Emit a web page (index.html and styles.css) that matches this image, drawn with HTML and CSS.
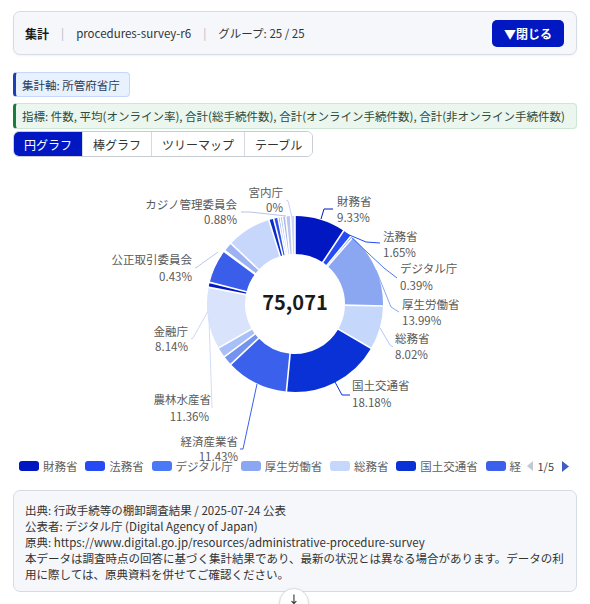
FILE: index.html
```html
<!DOCTYPE html>
<html lang="ja">
<head>
<meta charset="utf-8">
<title>集計 - procedures-survey-r6</title>
<link rel="stylesheet" href="styles.css">
</head>
<body>
<div class="page">
  <header class="summary">
    <div class="summary-info">
      <strong class="summary-title">集計</strong>
      <span class="sep">|</span>
      <span>procedures-survey-r6</span>
      <span class="sep">|</span>
      <span>グループ: 25 / 25</span>
    </div>
    <button class="btn-close" type="button">▼閉じる</button>
  </header>

  <div class="chip chip-axis">集計軸: 所管府省庁</div>
  <div class="chip chip-metric">指標: 件数, 平均(オンライン率), 合計(総手続件数), 合計(オンライン手続件数), 合計(非オンライン手続件数)</div>

  <div class="tabs">
    <div class="tab active">円グラフ</div>
    <div class="tab">棒グラフ</div>
    <div class="tab">ツリーマップ</div>
    <div class="tab">テーブル</div>
  </div>

  <svg class="pie-chart" viewBox="13 157 564 301" width="564" height="301">
    <g class="slices" fill="none" stroke-width="38">
      <circle cx="295" cy="304" r="69" stroke="#0017C1" stroke-dasharray="40.449 500" transform="rotate(-90 295 304)"/>
      <circle cx="295" cy="304" r="69" stroke="#264AF4" stroke-dasharray="7.153 500" transform="rotate(-56.412 295 304)"/>
      <circle cx="295" cy="304" r="69" stroke="#4979F5" stroke-dasharray="1.691 500" transform="rotate(-50.472 295 304)"/>
      <circle cx="295" cy="304" r="69" stroke="#8CA7F1" stroke-dasharray="60.652 500" transform="rotate(-49.068 295 304)"/>
      <circle cx="295" cy="304" r="69" stroke="#C5D7FB" stroke-dasharray="34.770 500" transform="rotate(1.296 295 304)"/>
      <circle cx="295" cy="304" r="69" stroke="#0A31D6" stroke-dasharray="78.818 500" transform="rotate(30.168 295 304)"/>
      <circle cx="295" cy="304" r="69" stroke="#3A60EC" stroke-dasharray="49.554 500" transform="rotate(95.616 295 304)"/>
      <circle cx="295" cy="304" r="69" stroke="#7393F0" stroke-dasharray="7.804 500" transform="rotate(136.764 295 304)"/>
      <circle cx="295" cy="304" r="69" stroke="#A9BFF7" stroke-dasharray="8.237 500" transform="rotate(143.244 295 304)"/>
      <circle cx="295" cy="304" r="69" stroke="#D9E4FC" stroke-dasharray="49.250 500" transform="rotate(150.084 295 304)"/>
      <circle cx="295" cy="304" r="69" stroke="#0017C1" stroke-dasharray="3.902 500" transform="rotate(190.98 295 304)"/>
      <circle cx="295" cy="304" r="69" stroke="#3A5DEA" stroke-dasharray="26.879 500" transform="rotate(194.22 295 304)"/>
      <circle cx="295" cy="304" r="69" stroke="#4979F5" stroke-dasharray="0.867 500" transform="rotate(216.54 295 304)"/>
      <circle cx="295" cy="304" r="69" stroke="#9CB2F3" stroke-dasharray="7.370 500" transform="rotate(217.26 295 304)"/>
      <circle cx="295" cy="304" r="69" stroke="#C7D7FB" stroke-dasharray="35.290 500" transform="rotate(223.38 295 304)"/>
      <circle cx="295" cy="304" r="69" stroke="#0A2BC7" stroke-dasharray="3.902 500" transform="rotate(252.684 295 304)"/>
      <circle cx="295" cy="304" r="69" stroke="#2A4EE6" stroke-dasharray="3.468 500" transform="rotate(255.924 295 304)"/>
      <circle cx="295" cy="304" r="69" stroke="#7096F8" stroke-dasharray="1.734 500" transform="rotate(258.804 295 304)"/>
      <circle cx="295" cy="304" r="69" stroke="#9DB2EE" stroke-dasharray="1.864 500" transform="rotate(260.244 295 304)"/>
      <circle cx="295" cy="304" r="69" stroke="#A9B8EA" stroke-dasharray="2.601 500" transform="rotate(261.792 295 304)"/>
      <circle cx="295" cy="304" r="69" stroke="#BAC6F2" stroke-dasharray="3.815 500" transform="rotate(263.952 295 304)"/>
      <circle cx="295" cy="304" r="69" stroke="#C9D5F9" stroke-dasharray="3.468 500" transform="rotate(267.12 295 304)"/>
    </g>
    <g class="gaps" stroke="#fff" stroke-width="1.6">
      <line x1="295" y1="214" x2="295" y2="256" transform="rotate(0 295 304)"/>
      <line x1="295" y1="214" x2="295" y2="256" transform="rotate(33.588 295 304)"/>
      <line x1="295" y1="214" x2="295" y2="256" transform="rotate(39.528 295 304)"/>
      <line x1="295" y1="214" x2="295" y2="256" transform="rotate(40.932 295 304)"/>
      <line x1="295" y1="214" x2="295" y2="256" transform="rotate(91.296 295 304)"/>
      <line x1="295" y1="214" x2="295" y2="256" transform="rotate(120.168 295 304)"/>
      <line x1="295" y1="214" x2="295" y2="256" transform="rotate(185.616 295 304)"/>
      <line x1="295" y1="214" x2="295" y2="256" transform="rotate(226.764 295 304)"/>
      <line x1="295" y1="214" x2="295" y2="256" transform="rotate(233.244 295 304)"/>
      <line x1="295" y1="214" x2="295" y2="256" transform="rotate(240.084 295 304)"/>
      <line x1="295" y1="214" x2="295" y2="256" transform="rotate(280.98 295 304)"/>
      <line x1="295" y1="214" x2="295" y2="256" transform="rotate(284.22 295 304)"/>
      <line x1="295" y1="214" x2="295" y2="256" transform="rotate(306.54 295 304)"/>
      <line x1="295" y1="214" x2="295" y2="256" transform="rotate(307.26 295 304)"/>
      <line x1="295" y1="214" x2="295" y2="256" transform="rotate(313.38 295 304)"/>
      <line x1="295" y1="214" x2="295" y2="256" transform="rotate(342.684 295 304)"/>
      <line x1="295" y1="214" x2="295" y2="256" transform="rotate(345.924 295 304)"/>
      <line x1="295" y1="214" x2="295" y2="256" transform="rotate(348.804 295 304)"/>
      <line x1="295" y1="214" x2="295" y2="256" transform="rotate(350.244 295 304)"/>
      <line x1="295" y1="214" x2="295" y2="256" transform="rotate(351.792 295 304)"/>
      <line x1="295" y1="214" x2="295" y2="256" transform="rotate(353.952 295 304)"/>
      <line x1="295" y1="214" x2="295" y2="256" transform="rotate(357.12 295 304)"/>
    </g>

    <g class="leaders" fill="none" stroke-width="1">
      <path d="M321 219 L324 209 L333 209" stroke="#0017C1"/>
      <path d="M347 234 L366 242 L380 243" stroke="#264AF4"/>
      <path d="M352 238 L384 268 L397 278" stroke="#4979F5"/>
      <path d="M376 270 L391 307 L399 312" stroke="#8CA7F1"/>
      <path d="M380 328 L390 345 L393 347" stroke="#B5C8F8"/>
      <path d="M335 382 L342 395 L350 395" stroke="#0A31D6"/>
      <path d="M257 384 L243 449 L240 449" stroke="#3A60EC"/>
      <path d="M209 318 L212 408" stroke="#D3DDF5"/>
      <path d="M208 311 L193 338 L191 339" stroke="#CFD9F2"/>
      <path d="M218 252 L197 267 L195 268" stroke="#B9C7EE"/>
      <path d="M286 216 L250 212 L241 212" stroke="#B7C3E8"/>
      <path d="M292 217 L288 201 L286 200" stroke="#C9D3F2"/>
    </g>

    <text class="total" x="295" y="310" text-anchor="middle">75,071</text>

    <g class="labels">
      <text x="337" y="206">財務省</text>
      <text x="337" y="222">9.33%</text>
      <text x="383" y="241">法務省</text>
      <text x="383" y="257">1.65%</text>
      <text x="400" y="273">デジタル庁</text>
      <text x="400" y="290">0.39%</text>
      <text x="402" y="309">厚生労働省</text>
      <text x="402" y="325">13.99%</text>
      <text x="395" y="343">総務省</text>
      <text x="395" y="359">8.02%</text>
      <text x="352" y="390">国土交通省</text>
      <text x="352" y="407">18.18%</text>
      <g text-anchor="end">
        <text x="238" y="446">経済産業省</text>
        <text x="238" y="461">11.43%</text>
        <text x="211" y="404">農林水産省</text>
        <text x="209" y="421">11.36%</text>
        <text x="188" y="336">金融庁</text>
        <text x="188" y="351">8.14%</text>
        <text x="192" y="264">公正取引委員会</text>
        <text x="192" y="281">0.43%</text>
        <text x="237" y="209">カジノ管理委員会</text>
        <text x="237" y="224">0.88%</text>
        <text x="283" y="197">宮内庁</text>
        <text x="283" y="212">0%</text>
      </g>
    </g>
  </svg>

  <div class="legend">
    <div class="legend-items">
      <div class="legend-item"><span class="swatch sw-1"></span>財務省</div>
      <div class="legend-item"><span class="swatch sw-2"></span>法務省</div>
      <div class="legend-item"><span class="swatch sw-3"></span>デジタル庁</div>
      <div class="legend-item"><span class="swatch sw-4"></span>厚生労働省</div>
      <div class="legend-item"><span class="swatch sw-5"></span>総務省</div>
      <div class="legend-item"><span class="swatch sw-6"></span>国土交通省</div>
      <div class="legend-item"><span class="swatch sw-7"></span>経済産業省</div>
    </div>
    <div class="pager">
      <svg class="pager-icon prev" width="6" height="10" viewBox="0 0 6 10"><path d="M6 0 L0 5 L6 10 Z"/></svg>
      <span class="pager-num">1/5</span>
      <svg class="pager-icon next" width="7" height="11" viewBox="0 0 7 11"><path d="M0 0 L7 5.5 L0 11 Z"/></svg>
    </div>
  </div>

  <div class="source">
    <p>出典: 行政手続等の棚卸調査結果 / 2025-07-24 公表</p>
    <p>公表者: デジタル庁 (Digital Agency of Japan)</p>
    <p>原典: https://www.digital.go.jp/resources/administrative-procedure-survey</p>
    <p>本データは調査時点の回答に基づく集計結果であり、最新の状況とは異なる場合があります。データの利用に際しては、原典資料を併せてご確認ください。</p>
  </div>
</div>
<button class="scroll-down" type="button" aria-label="下へ">↓</button>
</body>
</html>
```

FILE: styles.css
```css
* {
  box-sizing: border-box;
}

body {
  margin: 0;
  font-family: "Noto Sans CJK JP", "Noto Sans", "DejaVu Sans", sans-serif;
  font-size: 11.5px;
  color: #333;
  background: #fff;
}

.page {
  padding: 11px 13px 0;
}

/* header summary card */
.summary {
  height: 44px;
  display: flex;
  align-items: center;
  justify-content: space-between;
  padding: 0 12px 0 11px;
  background: #f5f7fa;
  border: 1px solid #d6dce5;
  border-radius: 7px;
  box-shadow: 0 1px 2px rgba(0, 0, 0, 0.05);
}

.summary-info {
  display: flex;
  align-items: center;
  font-size: 11.5px;
  color: #333;
}

.summary-title {
  font-weight: 700;
  font-size: 12px;
  color: #1a1a1a;
}

.sep {
  color: #b5b9c0;
  margin: 0 12px;
}

.btn-close {
  height: 27px;
  padding: 0 12px;
  border: none;
  border-radius: 5px;
  background: #0017c1;
  color: #fff;
  font-family: inherit;
  font-size: 12px;
  font-weight: 700;
}

/* chips */
.chip {
  display: flex;
  align-items: center;
  border: 1px solid;
  border-left-width: 3px;
  border-radius: 4px;
  white-space: nowrap;
}

.chip-axis {
  width: fit-content;
  height: 25px;
  margin-top: 17px;
  padding: 0 9px 0 6px;
  background: #e8f1fe;
  border-color: #c5d7fb;
  border-left-color: #1f3fb5;
  color: #2b3b58;
}

.chip-metric {
  height: 26px;
  margin-top: 6px;
  padding: 0 8px 0 6px;
  background: #eaf6ee;
  border-color: #cde6d5;
  border-left-color: #1e7b40;
  color: #2e4a3a;
}

/* tabs */
.tabs {
  display: inline-flex;
  height: 26px;
  margin-top: 2px;
  border: 1px solid #c8cdd5;
  border-radius: 6px;
  overflow: hidden;
}

.tab {
  display: flex;
  align-items: center;
  padding: 0 10px;
  font-size: 12px;
  color: #333;
  background: #fff;
  border-left: 1px solid #d5d9e0;
}

.tab:first-child {
  border-left: none;
}

.tab.active {
  background: #0017c1;
  color: #fff;
}

/* chart */
.pie-chart {
  display: block;
  overflow: visible;
}

.pie-chart .total {
  font-size: 20px;
  font-weight: 700;
  fill: #1a1a1a;
}

.pie-chart .labels {
  font-size: 11.5px;
  fill: #5a5a5a;
}

/* legend */
.legend {
  display: flex;
  align-items: center;
  height: 16px;
  padding-left: 6px;
}

.legend-items {
  display: flex;
  gap: 7.8px;
  width: 502.5px;
  overflow: hidden;
  white-space: nowrap;
}

.legend-item {
  display: flex;
  align-items: center;
  flex-shrink: 0;
  color: #5f5f5f;
  font-size: 11.5px;
}

.swatch {
  width: 20px;
  height: 10px;
  margin-right: 4px;
  border-radius: 3px;
}

.sw-1 { background: #0017c1; }
.sw-2 { background: #264af4; }
.sw-3 { background: #4979f5; }
.sw-4 { background: #8ca7f1; }
.sw-5 { background: #c5d7fb; }
.sw-6 { background: #0a31d6; }
.sw-7 { background: #3a60ec; }

.pager {
  display: flex;
  align-items: center;
  margin-left: 5px;
}

.pager-icon.prev {
  fill: #c4c8d0;
}

.pager-icon.next {
  fill: #3f5cc8;
}

.pager-num {
  margin: 0 8px 0 5px;
  font-size: 11px;
  color: #444;
}

/* source box */
.source {
  margin-top: 16px;
  padding: 11px 9px 9px 11px;
  background: #f5f7fa;
  border: 1px solid #d6dce5;
  border-radius: 7px;
  line-height: 16px;
  color: #333;
}

.source p {
  margin: 0;
}

/* floating scroll button */
.scroll-down {
  position: fixed;
  left: 279px;
  bottom: -14px;
  width: 30px;
  height: 30px;
  padding: 4px 0 0;
  border: 1px solid #d9dce1;
  border-radius: 50%;
  background: #fff;
  box-shadow: 0 1px 3px rgba(0, 0, 0, 0.12);
  color: #333;
  font-family: "DejaVu Sans", sans-serif;
  font-size: 13px;
  line-height: 1;
  display: flex;
  align-items: flex-start;
  justify-content: center;
}
```
